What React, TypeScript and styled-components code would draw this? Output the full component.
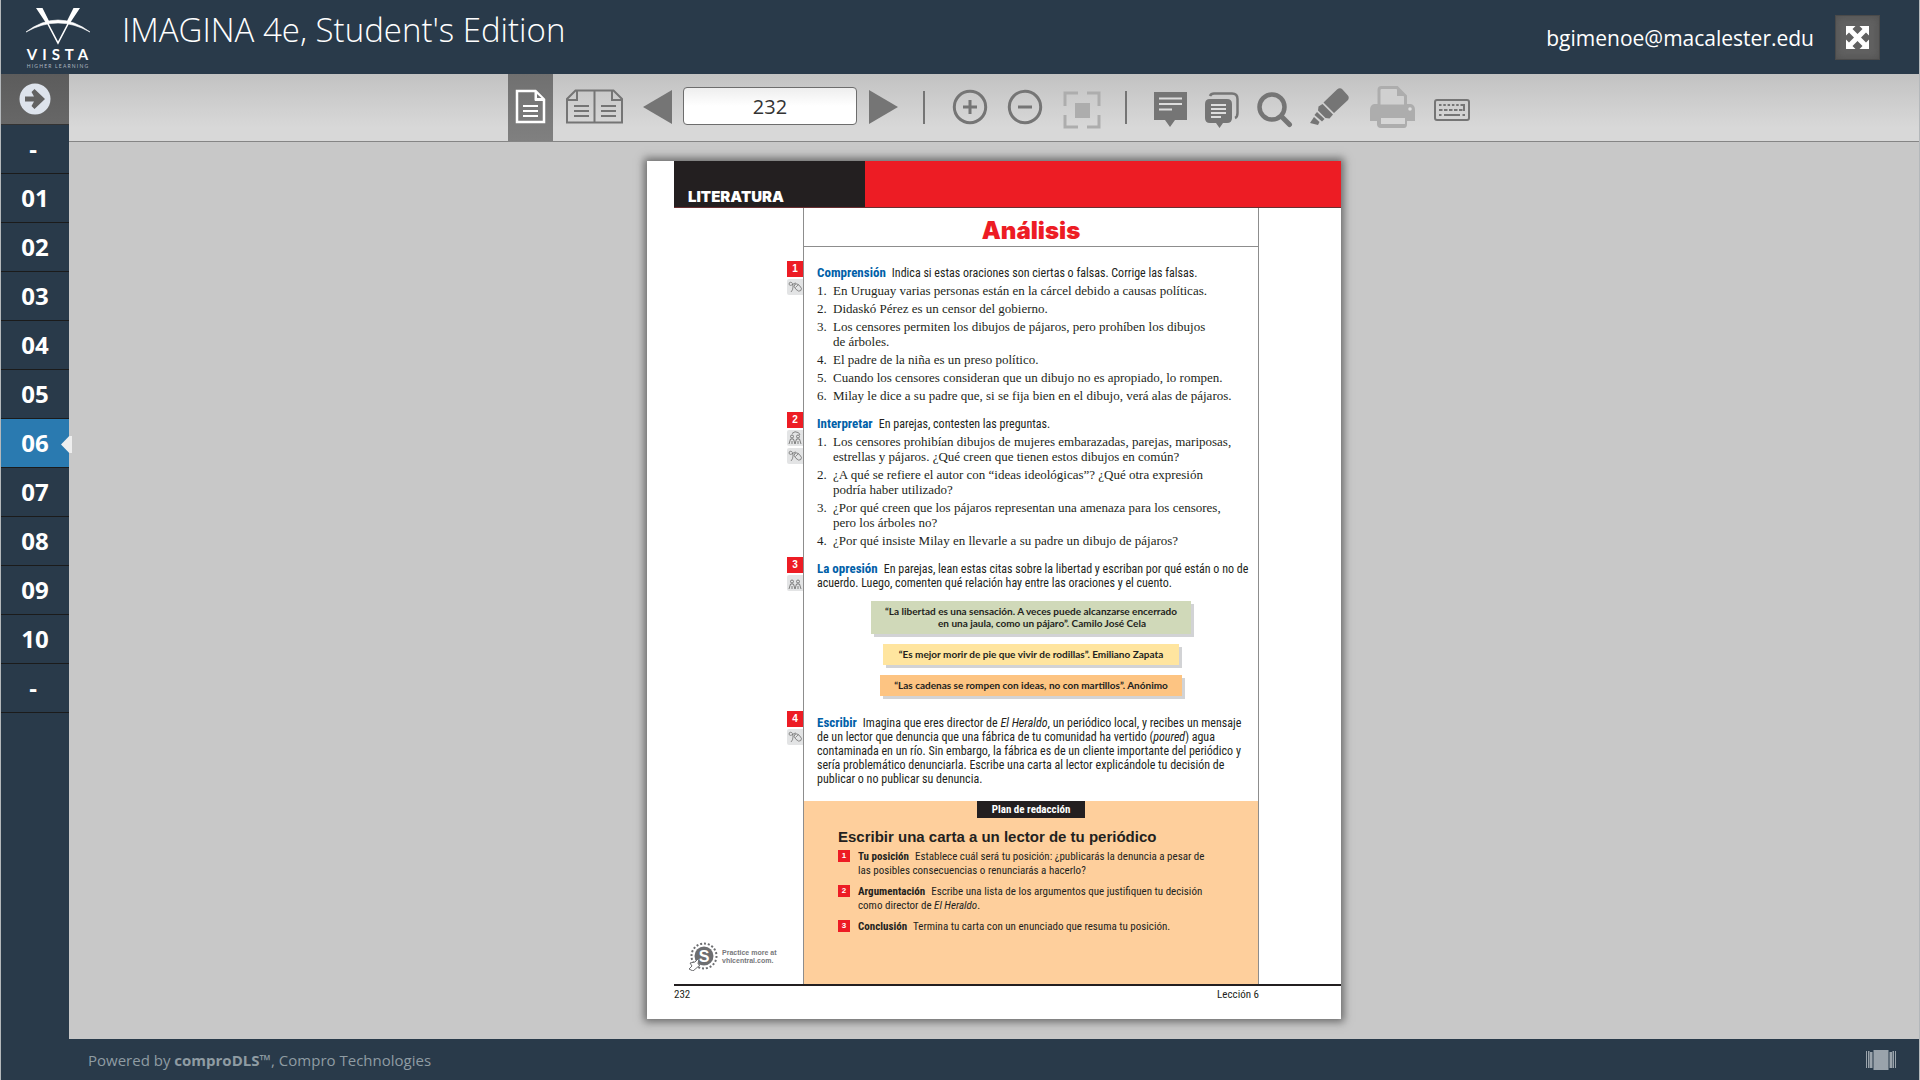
import React, { ReactNode, useState } from "react";
import styled, { createGlobalStyle, css } from "styled-components";

const ui = `"Open Sans", "Noto Sans", sans-serif`;
const condensed = `"Roboto Condensed", "Liberation Sans", sans-serif`;
const black = `Inter, "Liberation Sans", sans-serif`;

const navy = "#293a4a";
const red = "#ed1c24";
const ink = "#231f20";
const blue = "#0060a8";
const glyph = "#757575";

const GlobalStyle = createGlobalStyle`
  *, *::before, *::after { box-sizing: border-box; }
  body { margin: 0; background: #c8c8c8; font-family: ${ui}; }
  h1, h2, h3, p, ol { margin: 0; padding: 0; }
  ol { list-style: none; }
  button { border: 0; padding: 0; background: none; font: inherit; color: inherit; cursor: pointer; }
  svg { display: block; }
`;

/* ---------- application frame ---------- */

const Shell = styled.div`
  display: grid;
  grid-template: auto 1fr auto / 68px 1fr;
  min-height: 100vh;
  border: solid #b4b8bb;
  border-width: 0 1px;
`;

const Header = styled.header`
  grid-column: 1 / -1;
  display: flex;
  align-items: center;
  height: 74px;
  padding: 0 39px 0 24px;
  background: ${navy};
  color: #fff;
`;

const Title = styled.h1`
  flex: 1;
  padding: 0 0 14px 29px;
  font-size: 33px;
  font-weight: 300;
  line-height: 44px;
`;

const Email = styled.span`
  padding-top: 2px;
  font-size: 21px;
  line-height: 30px;
`;

const ExpandButton = styled.button`
  display: grid;
  place-items: center;
  width: 45px;
  height: 45px;
  margin-left: 21px;
  border: 1px solid #4a4a4a;
  background: #616161;
  box-shadow: inset 0 0 8px #505050;
`;

const Sidebar = styled.nav`
  grid-row: 2 / 4;
  background: ${navy};
`;

const SidebarToggle = styled.button`
  display: grid;
  place-items: center;
  width: 100%;
  height: 51px;
  border-bottom: 1px solid #333;
  background: linear-gradient(#5c5c5c, #676767);
`;

const ChapterList = styled.ol`
  display: flex;
  flex-direction: column;
`;

const Chapter = styled.button<{ $current?: boolean; $short?: boolean }>`
  position: relative;
  width: 100%;
  height: 49px;
  padding-right: ${(p) => (p.$short ? 4 : 0)}px;
  border-bottom: 1px solid #1b1b1b;
  background: ${(p) => (p.$current ? "#2a7ab0" : navy)};
  color: #fff;
  font-size: 24px;
  font-weight: 700;
  line-height: 48px;

  ${(p) =>
    p.$current &&
    css`
      &::after {
        content: "";
        position: absolute;
        top: 17px;
        right: -3px;
        width: 11px;
        height: 17px;
        background: #eee;
        clip-path: polygon(0 50%, 75% 0, 100% 0, 100% 100%, 75% 100%);
      }
    `}
`;

const Workspace = styled.main`
  display: flex;
  flex-direction: column;
`;

const Toolbar = styled.div`
  display: flex;
  justify-content: center;
  align-items: center;
  height: 68px;
  padding-left: 2px;
  border-bottom: 1px solid #858585;
  background: linear-gradient(#c2c2c2, #d0d0d0 50%, #d8d8d8 80%);
`;

const Tool = styled.button<{ $w: number; $active?: boolean; $faded?: boolean; $low?: boolean }>`
  display: grid;
  place-items: center;
  width: ${(p) => p.$w}px;
  height: 67px;
  padding: ${(p) => (p.$low ? "4px 0 0" : "0 0 2px")};
  color: ${(p) => (p.$active ? "#fff" : p.$faded ? "#adadad" : glyph)};
  background: ${(p) => (p.$active ? "linear-gradient(#707070, #808080)" : "none")};
`;

const Divider = styled.span`
  width: 2px;
  height: 33px;
  margin: 0 22px 0 18px;
  background: ${glyph};
`;

const PageNumber = styled.input`
  width: 174px;
  height: 38px;
  margin: 0 4px 3px;
  border: 1px solid #6d6d6d;
  border-radius: 4px;
  background: linear-gradient(#eee, #fff 50%);
  color: #333;
  font: 20px ${ui};
  text-align: center;
`;

const Viewer = styled.div`
  flex: 1;
  display: flex;
  justify-content: center;
  align-items: flex-start;
  padding: 19px 0 20px;
`;

const Footer = styled.footer`
  display: flex;
  justify-content: space-between;
  align-items: center;
  height: 41px;
  padding: 0 23px 0 19px;
  background: ${navy};
  color: #8f9ca3;
  font-size: 15px;
  line-height: 24px;
`;

/* ---------- textbook page ---------- */

const Sheet = styled.article`
  flex: 0 1 694px;
  background: #fff;
  box-shadow: 0 0 8px 3px #6b6b6b;
  color: ${ink};
`;

const Banner = styled.div`
  display: flex;
  height: 47px;
  margin-left: 27px;
  border-bottom: 1px solid #6a3032;
  background: ${red};
`;

const BannerLabel = styled.div`
  width: 191px;
  padding: 26px 0 0 14px;
  background: ${ink};
  color: #fff;
  font: 900 15px/20px ${black};
`;

const Columns = styled.div`
  display: grid;
  grid-template-columns: 156px 1fr 82px;
`;

const Margin = styled.div<{ $top?: number }>`
  display: flex;
  flex-direction: column;
  align-items: flex-end;
  gap: 2px;
  padding-top: ${(p) => p.$top ?? 1}px;
`;

const Body = styled.div<{ $top?: number; $bottom?: number }>`
  grid-column: 2;
  padding: ${(p) => p.$top ?? 6}px 0 ${(p) => p.$bottom ?? 8}px 13px;
  border: solid #8d8d8d;
  border-width: 0 1px;
  white-space: nowrap;
`;

const SectionTitle = styled.h2`
  grid-column: 2;
  height: 39px;
  border: 1px solid #8d8d8d;
  border-top: 0;
  color: ${red};
  font: 900 24px/46px ${black};
  text-align: center;
`;

const Badge = styled.span`
  width: 16px;
  height: 16px;
  background: ${red};
  color: #fff;
  font: 700 10px/16px "Liberation Sans", sans-serif;
  text-align: center;
`;

const MarginIcon = styled.span`
  display: grid;
  place-items: center;
  width: 16px;
  height: 16px;
  border-radius: 2px 0 0 2px;
  background: #e3e4e5;
  color: #666;
`;

const Prompt = styled.p`
  font: 400 12px/14px ${condensed};
`;

const Term = styled.strong`
  margin-right: 6px;
  color: ${blue};
  font-size: 13px;
  font-weight: 700;
  line-height: 13px;
`;

const Questions = styled.ol`
  display: flex;
  flex-direction: column;
  gap: 3px;
  padding-top: 3px;
  font: 13px/15px "Liberation Serif", serif;
`;

const Question = styled.li`
  display: grid;
  grid-template-columns: 16px 1fr;
`;

const Quotes = styled.div`
  display: flex;
  flex-direction: column;
  align-items: center;
  gap: 10px;
  padding: 11px 13px 6px 0;
`;

const Quote = styled.blockquote<{ $tone: string; $w: number }>`
  width: ${(p) => p.$w}px;
  margin: 0;
  padding: 4px 0 5px;
  background: ${(p) => p.$tone};
  box-shadow: 3px 3px 0 #d2d3d5;
  font: 700 10px/12px Lato, sans-serif;
  text-align: center;
`;

const Indent = styled.span`
  padding-left: 22px;
`;

const Plan = styled.div`
  grid-column: 2;
  display: flex;
  flex-direction: column;
  height: 183px;
  padding: 0 0 0 34px;
  border: solid #8d8d8d;
  border-width: 0 1px;
  background: #fecf9c;
  white-space: nowrap;
`;

const PlanTab = styled.div`
  align-self: center;
  width: 108px;
  margin-right: 34px;
  background: ${ink};
  color: #fff;
  font: 700 11px/17px ${condensed};
  text-align: center;
`;

const PlanTitle = styled.h3`
  padding: 9px 0 3px;
  font: 700 15px/20px "Liberation Sans", sans-serif;
`;

const Steps = styled.ol`
  display: flex;
  flex-direction: column;
  gap: 7px;
  font: 11px/14px ${condensed};
`;

const Step = styled.li`
  display: grid;
  grid-template-columns: 20px 1fr;
  align-items: start;
`;

const StepNumber = styled.span`
  width: 12px;
  height: 12px;
  background: ${red};
  color: #fff;
  font: 700 8px/12px "Liberation Sans", sans-serif;
  text-align: center;
`;

const StepName = styled.strong`
  margin-right: 6px;
`;

const Practice = styled.div`
  display: flex;
  align-self: end;
  align-items: center;
  gap: 4px;
  padding: 0 0 13px 42px;
  color: #77787b;
  font: 700 7px/8px "Liberation Sans", sans-serif;
`;

const PageFoot = styled.div`
  display: flex;
  justify-content: space-between;
  height: 35px;
  margin-left: 27px;
  padding-right: 82px;
  border-top: 2px solid ${ink};
  font: 11px/17px ${condensed};
`;

/* ---------- drawings ---------- */

const Logo = () => (
  <svg width="68" height="64" viewBox="0 0 68 64" aria-label="Vista Higher Learning" role="img">
    <path d="M11 3h6.500L25 18h-4z M55 3h-6.500L41 18h4z" fill="#fff" />
    <path d="M22.500 18L33 38 43.500 18" fill="none" stroke="#fff" strokeWidth="1.600" />
    <path d="M1 27Q33 3 65 27Q33 9 1 27z" fill="#fff" stroke="#fff" strokeWidth=".6" />
    <text x="35" y="55" fill="#fff" fontFamily="Lato, sans-serif" fontSize="15" fontWeight="700" textAnchor="middle" letterSpacing="5">VISTA</text>
    <text x="33" y="63" fill="#aeb8c0" fontFamily="Lato, sans-serif" fontSize="5" textAnchor="middle" letterSpacing="1.200">HIGHER LEARNING</text>
  </svg>
);

const ExpandIcon = () => (
  <svg width="25" height="25" viewBox="0 0 25 25" fill="#fff">
    <path d="M1 1h9.500L7.500 4 12.500 9 17.500 4 14.500 1H24v9.500L21 7.500 16 12.500 21 17.500 24 14.500V24h-9.500L17.500 21 12.500 16 7.500 21 10.500 24H1v-9.500L4 17.500 9 12.500 4 7.500 1 10.500z" />
  </svg>
);

const ArrowIcon = () => (
  <svg width="32" height="32" viewBox="0 0 32 32">
    <circle cx="16" cy="16" r="15.500" fill="#dde3ec" />
    <path d="M6 13.500h9L12.500 9l3-3L26 16 15.500 26l-3-3 2.500-4.500H6z" fill="#626262" />
  </svg>
);

const SinglePageIcon = () => (
  <svg width="31" height="35" viewBox="0 0 31 35" fill="none" stroke="currentColor" strokeWidth="2.500">
    <path d="M2 2h18.500L29 10.500V33H2z" />
    <path d="M20 2v9.500h9z" fill="currentColor" strokeWidth="1" />
    <path d="M22 5v4h4.500z" fill="#777" stroke="none" />
    <path d="M8 17h15M8 22h15M8 27h15" strokeWidth="2" />
  </svg>
);

const DoublePageIcon = () => (
  <svg width="57" height="35" viewBox="0 0 57 35" fill="none" stroke="currentColor" strokeWidth="2">
    <path d="M9.500 1.500h38L56 10v23.500H1V10z M28.500 1.500v32" />
    <path d="M11 1.500V11H1M46 1.500V11h10" />
    <path d="M8 17h15M8 22h15M8 27h15M35 17h15M35 22h15M35 27h15" />
  </svg>
);

const PrevIcon = () => (
  <svg width="29" height="34" viewBox="0 0 29 34" fill="currentColor"><path d="M0 17L29 0v34z" /></svg>
);

const NextIcon = () => (
  <svg width="29" height="34" viewBox="0 0 29 34" fill="currentColor"><path d="M29 17L0 0v34z" /></svg>
);

const ZoomIcon = ({ plus }: { plus?: boolean }) => (
  <svg width="36" height="36" viewBox="0 0 36 36" fill="none" stroke="currentColor" strokeWidth="3">
    <circle cx="18" cy="18" r="15.700" />
    <path d={plus ? "M11 18h14M18 11v14" : "M11 18h14"} />
  </svg>
);

const FitIcon = () => (
  <svg width="38" height="38" viewBox="0 0 38 38" fill="none" stroke="currentColor" strokeWidth="3">
    <path d="M2 15V2h13M24 2h12v13M36 24v12H24M15 36H2V24" />
    <path d="M12 12h15v15H12z" fill="currentColor" stroke="none" />
  </svg>
);

const NoteIcon = () => (
  <svg width="33" height="35" viewBox="0 0 33 35">
    <path d="M0 0h33v28H21l-5 7-5-7H0z" fill="currentColor" />
    <path d="M5 6.500h23M5 12h23M5 17.500h13" stroke="#ddd" strokeWidth="2.200" />
  </svg>
);

const NotesIcon = () => (
  <svg width="34" height="36" viewBox="0 0 34 36">
    <path d="M5 4Q6 1.500 9 1.500h18q5.500 0 5.500 5.500v14q0 4-2.500 5" fill="none" stroke="currentColor" strokeWidth="2.500" />
    <path d="M5 7h17q5 0 5 5v14q0 5-5 5h-4l-3.500 5-3.500-5H5q-5 0-5-5V12q0-5 5-5z" fill="currentColor" />
    <path d="M6 13h15M6 17h15M6 21h15M6 25h10" stroke="#ddd" strokeWidth="1.800" />
  </svg>
);

const SearchIcon = () => (
  <svg width="36" height="36" viewBox="0 0 36 36" fill="none" stroke="currentColor">
    <circle cx="15" cy="15" r="12.500" strokeWidth="4.500" />
    <path d="M24.500 24.500l8 8" strokeWidth="5" strokeLinecap="round" />
  </svg>
);

const MarkerIcon = () => (
  <svg width="39" height="37" viewBox="0 0 39 37" fill="currentColor">
    <path d="M27 1.500q3-2.500 5.500 0l5 5.500q2.500 2.500 0 5.500L24 25 13.500 14.500z" />
    <path d="M12.500 16l10.500 10.500-3.500 4-4-.500L8 22.500l.500-4z" />
    <path d="M7 24l7.500 7-2.500 2.500-7.500-6.500z" />
    <path d="M4 29l5.500 5L8 37 0 35z" />
  </svg>
);

const PrintIcon = () => (
  <svg width="45" height="42" viewBox="0 0 45 42">
    <path d="M4 18h37q4 1 4 6v11H37v3q0 4-3 4H11q-4 0-4-4v-3H0V24q0-5 4-6z" fill="currentColor" />
    <path d="M9 20V4q0-2.500 2.500-2.500H27L35.500 10v10z" fill="#d0d0d0" stroke="currentColor" strokeWidth="3" />
    <path d="M27 1.500V10h8.500z" fill="currentColor" />
    <path d="M11 32h24v6H11z" fill="#d6d6d6" />
    <circle cx="40" cy="23" r="1.800" fill="#ddd" />
  </svg>
);

const KeyboardIcon = () => (
  <svg width="36" height="22" viewBox="0 0 36 22" fill="none" stroke="currentColor" strokeWidth="2">
    <rect x="1" y="1" width="34" height="20" rx="2" />
    <path d="M5 6h26" strokeDasharray="2.500 1.800" />
    <path d="M5 11h26" strokeDasharray="3.500 1.500" />
    <path d="M5 16h2.500M10 16h16M28.500 16H31M30 5v7" />
  </svg>
);

const CarouselIcon = () => (
  <svg width="30" height="20" viewBox="0 0 30 20" fill="#9aa3ab">
    <path d="M0 1h1v17H0zM2 1h1.500v17H2zM4 2h2.500v16H4zM7.500 0h15v20h-15zM23.500 2H26v16h-2.500zM26.500 1H28v17h-1.500zM29 1h1v17h-1z" />
  </svg>
);

const MouseIcon = () => (
  <svg width="14" height="12" viewBox="0 0 14 12" fill="none" stroke="currentColor" strokeWidth=".7">
    <path d="M3 11q2-2 2-5Q5 1.500 2.800 1.200.8 1.200 1 3.500q1 1.500 3 .5 2-2 4-2" />
    <ellipse cx="9.800" cy="6.500" rx="2.600" ry="4.300" transform="rotate(-45 9.800 6.500)" />
    <path d="M7.500 6.500l3-3" />
  </svg>
);

const PairIcon = ({ talk }: { talk?: boolean }) => (
  <svg width="14" height="14" viewBox="0 0 14 14" fill="none" stroke="currentColor" strokeWidth=".8">
    <circle cx="4" cy="5.500" r="1.500" />
    <circle cx="10" cy="5.500" r="1.500" />
    <path d="M1 13l1.500-5h3L7 13M7 13l1.500-5h3L13 13M4 10v3M10 10v3" />
    {talk && <path d="M4 2.500Q7-.500 10 1.500T11.500 4" />}
  </svg>
);

const PracticeIcon = () => (
  <svg width="29" height="29" viewBox="0 0 29 29">
    <circle cx="15" cy="14" r="12.500" fill="none" stroke="#6d6e71" strokeWidth="2" strokeDasharray="2 1.900" />
    <circle cx="15" cy="14" r="9.500" fill="#6d6e71" />
    <text x="15" y="20" fill="#fff" fontFamily="Liberation Sans, sans-serif" fontSize="16" fontWeight="700" textAnchor="middle">S</text>
    <path d="M1 21l5-1 4-4-1 6 2 1-7 6-4-2 3-3z" fill="#fff" stroke="#6d6e71" />
  </svg>
);

/* ---------- content ---------- */

const chapters = ["-", "01", "02", "03", "04", "05", "06", "07", "08", "09", "10", "-"];

const lines = (parts: ReactNode[]) =>
  parts.map((part, i) => (
    <React.Fragment key={i}>
      {i > 0 && <br />}
      {part}
    </React.Fragment>
  ));

const comprension = [
  ["En Uruguay varias personas están en la cárcel debido a causas políticas."],
  ["Didaskó Pérez es un censor del gobierno."],
  ["Los censores permiten los dibujos de pájaros, pero prohíben los dibujos", "de árboles."],
  ["El padre de la niña es un preso político."],
  ["Cuando los censores consideran que un dibujo no es apropiado, lo rompen."],
  ["Milay le dice a su padre que, si se fija bien en el dibujo, verá alas de pájaros."],
];

const interpretar = [
  ["Los censores prohibían dibujos de mujeres embarazadas, parejas, mariposas,", "estrellas y pájaros. ¿Qué creen que tienen estos dibujos en común?"],
  ["¿A qué se refiere el autor con “ideas ideológicas”? ¿Qué otra expresión", "podría haber utilizado?"],
  ["¿Por qué creen que los pájaros representan una amenaza para los censores,", "pero los árboles no?"],
  ["¿Por qué insiste Milay en llevarle a su padre un dibujo de pájaros?"],
];

const steps: { name: string; text: ReactNode[] }[] = [
  { name: "Tu posición", text: ["Establece cuál será tu posición: ¿publicarás la denuncia a pesar de", "las posibles consecuencias o renunciarás a hacerlo?"] },
  { name: "Argumentación", text: ["Escribe una lista de los argumentos que justifiquen tu decisión", <>como director de <em>El Heraldo</em>.</>] },
  { name: "Conclusión", text: ["Termina tu carta con un enunciado que resuma tu posición."] },
];

const QuestionList = ({ items }: { items: string[][] }) => (
  <Questions>
    {items.map((item, i) => (
      <Question key={i}>
        <span>{i + 1}.</span>
        <span>{lines(item)}</span>
      </Question>
    ))}
  </Questions>
);

const TextbookPage = () => (
  <Sheet>
    <Banner>
      <BannerLabel>LITERATURA</BannerLabel>
    </Banner>
    <Columns>
      <SectionTitle>Análisis</SectionTitle>
    </Columns>

    <Columns>
      <Margin $top={14}>
        <Badge>1</Badge>
        <MarginIcon><MouseIcon /></MarginIcon>
      </Margin>
      <Body $top={19}>
        <Prompt><Term>Comprensión</Term>Indica si estas oraciones son ciertas o falsas. Corrige las falsas.</Prompt>
        <QuestionList items={comprension} />
      </Body>
    </Columns>

    <Columns>
      <Margin>
        <Badge>2</Badge>
        <MarginIcon><PairIcon talk /></MarginIcon>
        <MarginIcon><MouseIcon /></MarginIcon>
      </Margin>
      <Body>
        <Prompt><Term>Interpretar</Term>En parejas, contesten las preguntas.</Prompt>
        <QuestionList items={interpretar} />
      </Body>
    </Columns>

    <Columns>
      <Margin>
        <Badge>3</Badge>
        <MarginIcon><PairIcon /></MarginIcon>
      </Margin>
      <Body>
        <Prompt>
          <Term>La opresión</Term>
          {lines(["En parejas, lean estas citas sobre la libertad y escriban por qué están o no de", "acuerdo. Luego, comenten qué relación hay entre las oraciones y el cuento."])}
        </Prompt>
        <Quotes>
          <Quote $tone="#d0d9b9" $w={320}>
            “La libertad es una sensación. A veces puede alcanzarse encerrado<br />
            <Indent>en una jaula, como un pájaro”. Camilo José Cela</Indent>
          </Quote>
          <Quote $tone="#ffe59f" $w={296}>“Es mejor morir de pie que vivir de rodillas”. Emiliano Zapata</Quote>
          <Quote $tone="#fdc482" $w={302}>“Las cadenas se rompen con ideas, no con martillos”. Anónimo</Quote>
        </Quotes>
      </Body>
    </Columns>

    <Columns>
      <Margin>
        <Badge>4</Badge>
        <MarginIcon><MouseIcon /></MarginIcon>
      </Margin>
      <Body $bottom={15}>
        <Prompt>
          <Term>Escribir</Term>
          {lines([
            <>Imagina que eres director de <em>El Heraldo</em>, un periódico local, y recibes un mensaje</>,
            <>de un lector que denuncia que una fábrica de tu comunidad ha vertido (<em>poured</em>) agua</>,
            "contaminada en un río. Sin embargo, la fábrica es de un cliente importante del periódico y",
            "sería problemático denunciarla. Escribe una carta al lector explicándole tu decisión de",
            "publicar o no publicar su denuncia.",
          ])}
        </Prompt>
      </Body>
    </Columns>

    <Columns>
      <Practice>
        <PracticeIcon />
        <span>Practice more at<br />vhlcentral.com.</span>
      </Practice>
      <Plan>
        <PlanTab>Plan de redacción</PlanTab>
        <PlanTitle>Escribir una carta a un lector de tu periódico</PlanTitle>
        <Steps>
          {steps.map((step, i) => (
            <Step key={step.name}>
              <StepNumber>{i + 1}</StepNumber>
              <span><StepName>{step.name}</StepName>{lines(step.text)}</span>
            </Step>
          ))}
        </Steps>
      </Plan>
    </Columns>

    <PageFoot>
      <span>232</span>
      <span>Lección 6</span>
    </PageFoot>
  </Sheet>
);

export default function App() {
  const [page, setPage] = useState("232");
  const turn = (by: number) => setPage((p) => String((parseInt(p, 10) || 0) + by));

  return (
    <>
      <GlobalStyle />
      <Shell>
        <Header>
          <Logo />
          <Title>IMAGINA 4e, Student's Edition</Title>
          <Email>bgimenoe@macalester.edu</Email>
          <ExpandButton aria-label="Full screen"><ExpandIcon /></ExpandButton>
        </Header>

        <Sidebar aria-label="Chapters">
          <SidebarToggle aria-label="Open contents"><ArrowIcon /></SidebarToggle>
          <ChapterList>
            {chapters.map((name, i) => (
              <li key={i}>
                <Chapter $current={name === "06"} $short={name === "-"}>{name}</Chapter>
              </li>
            ))}
          </ChapterList>
        </Sidebar>

        <Workspace>
          <Toolbar>
            <Tool $w={45} $active aria-label="Single page"><SinglePageIcon /></Tool>
            <Tool $w={82} aria-label="Two pages"><DoublePageIcon /></Tool>
            <Tool $w={44} aria-label="Previous page" onClick={() => turn(-1)}><PrevIcon /></Tool>
            <PageNumber aria-label="Page number" value={page} onChange={(e) => setPage(e.target.value)} />
            <Tool $w={44} aria-label="Next page" onClick={() => turn(1)}><NextIcon /></Tool>
            <Divider />
            <Tool $w={45} aria-label="Zoom in"><ZoomIcon plus /></Tool>
            <Tool $w={65} aria-label="Zoom out"><ZoomIcon /></Tool>
            <Tool $w={50} $faded $low aria-label="Fit page"><FitIcon /></Tool>
            <Divider />
            <Tool $w={42} $low aria-label="Add note"><NoteIcon /></Tool>
            <Tool $w={62} $low aria-label="All notes"><NotesIcon /></Tool>
            <Tool $w={43} $low aria-label="Search"><SearchIcon /></Tool>
            <Tool $w={66} aria-label="Highlight"><MarkerIcon /></Tool>
            <Tool $w={60} $faded aria-label="Print"><PrintIcon /></Tool>
            <Tool $w={60} $low aria-label="Keyboard shortcuts"><KeyboardIcon /></Tool>
          </Toolbar>
          <Viewer>
            <TextbookPage />
          </Viewer>
        </Workspace>

        <Footer>
          <span>Powered by <strong>comproDLS™</strong>, Compro Technologies</span>
          <CarouselIcon />
        </Footer>
      </Shell>
    </>
  );
}
